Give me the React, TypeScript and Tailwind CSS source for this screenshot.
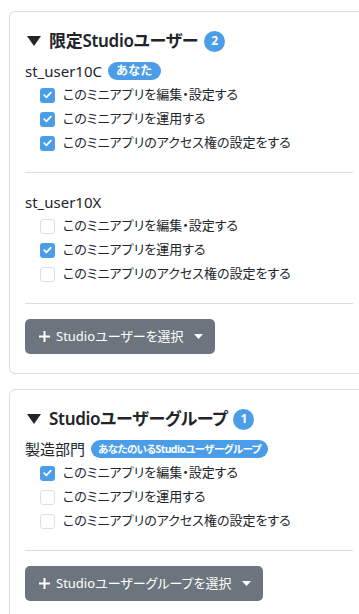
import React from 'react';

// Permission rows shown under each user / group
const PERMS = [
  'このミニアプリを編集・設定する',
  'このミニアプリを運用する',
  'このミニアプリのアクセス権の設定をする',
];

interface Member {
  name: string;
  badge?: string;
  checked: boolean[];
}

const Check = ({ on }: { on: boolean }) =>
  on ? (
    <span className="flex h-[15px] w-[15px] items-center justify-center rounded-[3px] bg-[#4a9de6]">
      <svg width="9" height="8" viewBox="0 0 9 8" fill="none">
        <path d="M1.2 4.2 3.4 6.3 7.8 1.6" stroke="#fff" strokeWidth="1.7" strokeLinecap="round" strokeLinejoin="round" />
      </svg>
    </span>
  ) : (
    <span className="h-[15px] w-[15px] rounded-[3px] border border-[#dcdfe3] bg-white" />
  );

const MemberBlock = ({ m }: { m: Member }) => (
  <div>
    <div className="flex h-[22px] items-center gap-[6px]">
      <span className="text-[15px] text-[#212529]">{m.name}</span>
      {m.badge && (
        <span
          className={
            m.badge.length > 5
              ? 'rounded-full bg-[#4a9de6] px-[7px] text-[10.5px] leading-[18px] font-bold tracking-[-0.6px] text-white'
              : 'rounded-full bg-[#4a9de6] px-[8px] text-[12px] leading-[18px] font-bold tracking-[0.5px] text-white'
          }
        >
          {m.badge}
        </span>
      )}
    </div>
    <div className="mt-[1px] flex flex-col pl-[15px]">
      {PERMS.map((p, i) => (
        <label key={i} className="flex h-[24px] items-center gap-[8px]">
          <Check on={m.checked[i]} />
          <span className="text-[13px] text-[#212529]">{p}</span>
        </label>
      ))}
    </div>
  </div>
);

const Section = ({
  title,
  count,
  members,
  button,
}: {
  title: string;
  count: number;
  members: Member[];
  button: string;
}) => (
  <div className="-mr-[10px] rounded-[6px] border border-[#dcdcdc] bg-white px-[15px] pt-[16px] pb-[19px]">
    <div className="flex h-[26px] items-center">
      <svg width="14" height="10" viewBox="0 0 14 10" className="ml-[2px] mr-[8px]">
        <path d="M0 0h14L7 10z" fill="#212529" />
      </svg>
      <span className="text-[17px] font-semibold tracking-[-0.3px] text-[#212529]">{title}</span>
      <span className="ml-[6px] flex h-[21px] w-[21px] items-center justify-center rounded-full bg-[#4a9de6] text-[12px] font-bold text-white">
        {count}
      </span>
    </div>
    <div className="mt-[6px]">
      {members.map((m, i) => (
        <React.Fragment key={i}>
          <MemberBlock m={m} />
          <div className={i === members.length - 1 ? 'mt-[17px] border-t border-[#dcdcdc]' : 'mt-[17px] mb-[18px] border-t border-[#dcdcdc]'} />
        </React.Fragment>
      ))}
    </div>
    <button className="mt-[15px] flex h-[35px] items-center rounded-[5px] bg-[#6c757d] pr-[12px] pl-[13px] text-[13px] text-white">
      <svg width="13" height="13" viewBox="0 0 13 13" className="mr-[5px]">
        <path d="M6.5 1v11M1 6.5h11" stroke="#fff" strokeWidth="2" />
      </svg>
      {button}
      <svg width="9" height="5" viewBox="0 0 9 5" className="ml-[10px]">
        <path d="M0 0h9L4.5 5z" fill="#fff" />
      </svg>
    </button>
  </div>
);

export default function App() {
  return (
    <div
      className="min-h-screen overflow-hidden bg-white pt-[11px] pl-[9px] [font-feature-settings:'palt']"
      style={{ fontFamily: '"Noto Sans", "Noto Sans CJK JP", sans-serif' }}
    >
      <Section
        title="限定Studioユーザー"
        count={2}
        button="Studioユーザーを選択"
        members={[
          { name: 'st_user10C', badge: 'あなた', checked: [true, true, true] },
          { name: 'st_user10X', checked: [false, true, false] },
        ]}
      />
      <div className="mt-[15px]">
        <Section
          title="Studioユーザーグループ"
          count={1}
          button="Studioユーザーグループを選択"
          members={[{ name: '製造部門', badge: 'あなたのいるStudioユーザーグループ', checked: [true, false, false] }]}
        />
      </div>
    </div>
  );
}
